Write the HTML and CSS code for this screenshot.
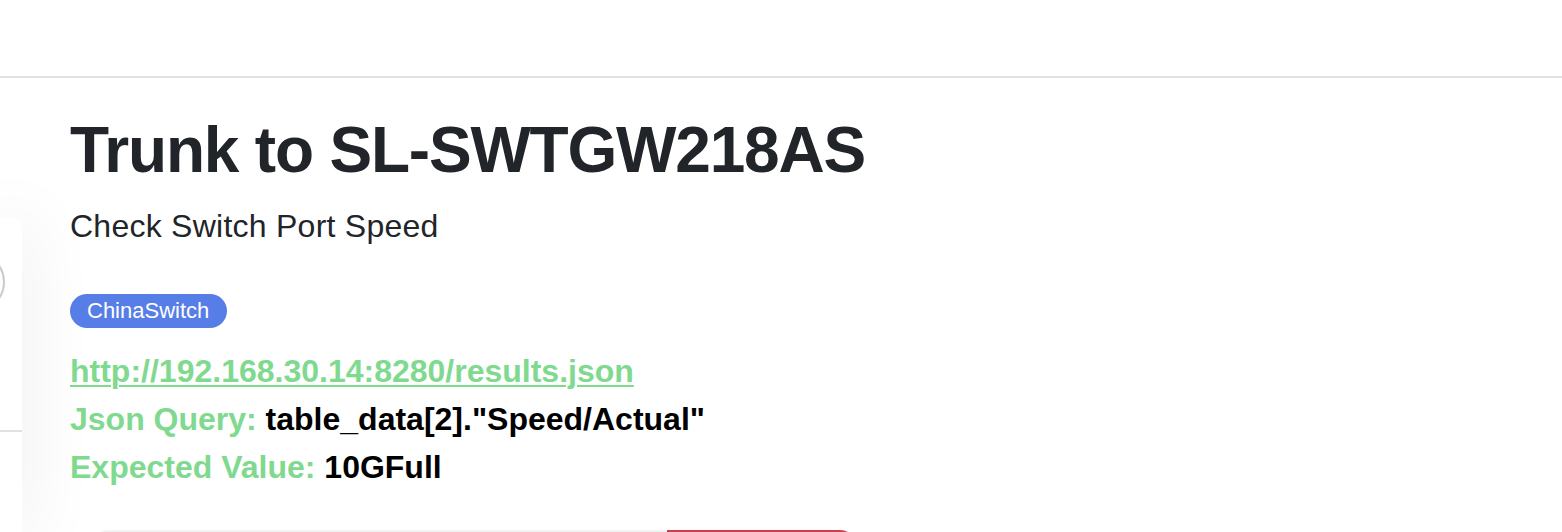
FILE: index.html
```html
<!DOCTYPE html>
<html lang="en">
<head>
<meta charset="utf-8">
<title>Trunk to SL-SWTGW218AS</title>
<link rel="stylesheet" href="styles.css">
</head>
<body>
<header class="topbar"></header>
<div class="layout">
  <aside class="side-card">
    <div class="avatar"></div>
    <div class="side-divider"></div>
  </aside>
  <main class="content">
    <h1 class="title">Trunk to SL-SWTGW218AS</h1>
    <p class="subtitle">Check Switch Port Speed</p>
    <div class="tags"><span class="badge">ChinaSwitch</span></div>
    <a class="url" href="#">http://192.168.30.14:8280/results.json</a>
    <div class="field"><span class="label">Json Query:</span> <span class="value">table_data[2]."Speed/Actual"</span></div>
    <div class="field"><span class="label">Expected Value:</span> <span class="value">10GFull</span></div>
    <div class="progress">
      <div class="progress-rest"></div>
      <div class="progress-fail"></div>
    </div>
  </main>
</div>
</body>
</html>
```
FILE: styles.css
```css
html, body {
  margin: 0;
  padding: 0;
  background: #ffffff;
  height: 100%;
  overflow: hidden;
}
body {
  font-family: "Liberation Sans", Arial, Helvetica, sans-serif;
  color: #212529;
}
.topbar {
  height: 76px;
  border-bottom: 2px solid #dee2e6;
  background: #ffffff;
}
.layout {
  display: flex;
  align-items: flex-start;
  height: calc(100% - 78px);
  overflow: hidden;
}
.side-card {
  flex: 0 0 22px;
  width: 22px;
  margin-top: 140px;
  height: 320px;
  background: #ffffff;
  border-radius: 0 10px 0 0;
  box-shadow: 0 0 70px rgba(0, 0, 0, 0.12);
  overflow: hidden;
  display: flex;
  flex-direction: column;
}
.avatar {
  width: 56px;
  height: 56px;
  margin-top: 34px;
  margin-left: -55px;
  border: 2px solid #c8ccd1;
  border-radius: 50%;
  flex: 0 0 auto;
}
.side-divider {
  margin-top: 118px;
  border-top: 2px solid #dee2e6;
}
.content {
  flex: 1 1 auto;
  padding-left: 48px;
  display: flex;
  flex-direction: column;
  align-items: flex-start;
}
.title {
  margin: 34px 0 0 0;
  font-size: 64px;
  line-height: 76px;
  font-weight: 700;
  letter-spacing: -1.2px;
  color: #212529;
}
.subtitle {
  margin: 14px 0 0 0;
  font-size: 32px;
  line-height: 48px;
  letter-spacing: 0.25px;
  color: #212529;
}
.tags {
  margin-top: 44px;
  display: flex;
}
.badge {
  display: inline-block;
  height: 34px;
  line-height: 34px;
  padding: 0 18px 0 17px;
  font-size: 22px;
  color: #ffffff;
  background: #577de6;
  border-radius: 17px;
}
.url {
  margin-top: 19px;
  font-size: 32px;
  line-height: 48px;
  font-weight: 700;
  color: #7fd98f;
  text-decoration: underline;
  text-decoration-thickness: 2px;
  text-underline-offset: 3px;
}
.field {
  font-size: 32px;
  line-height: 48px;
  font-weight: 700;
  color: #000000;
}
.label {
  color: #7fd98f;
}
.progress {
  margin-top: 39px;
  margin-left: 22px;
  display: flex;
  height: 40px;
  width: 764px;
  flex: 0 0 auto;
}
.progress-rest {
  flex: 0 0 575px;
  background: #f3f3f3;
  border-radius: 16px 0 0 16px;
}
.progress-fail {
  flex: 1 1 auto;
  background: #c8404a;
  border-radius: 0 16px 16px 0;
}
```
